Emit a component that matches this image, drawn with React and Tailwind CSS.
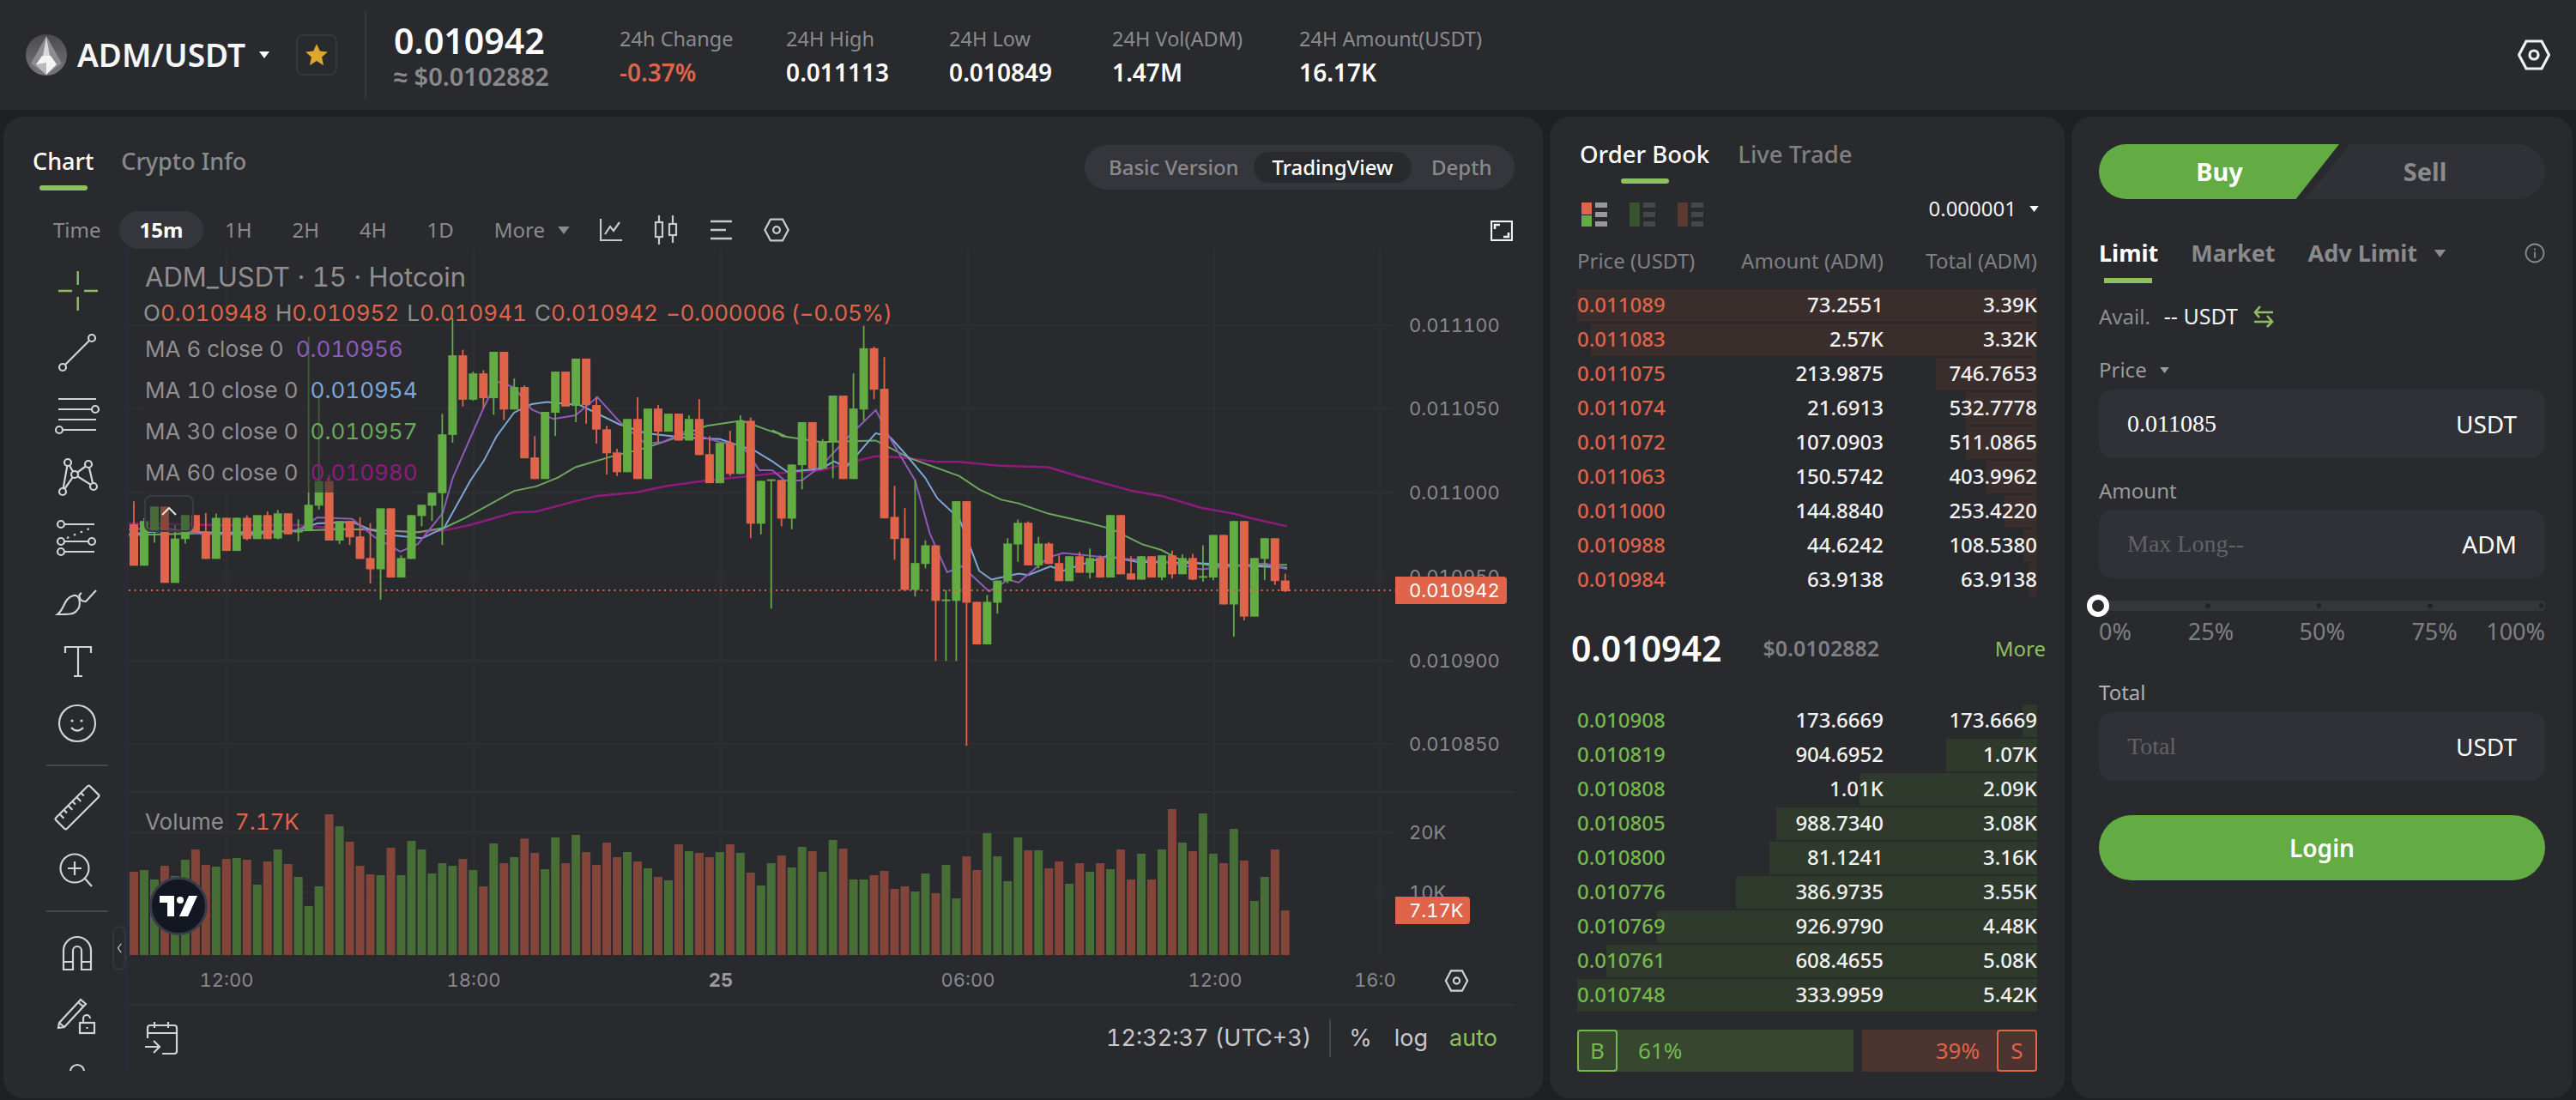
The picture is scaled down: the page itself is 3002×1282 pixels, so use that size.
import React from 'react'

const RED = '#df6449'
const GREEN = '#62ac43'

// [color, bodyTop, bodyBottom, wickTop, wickBottom], y read off the chart
const candles = [
  ['r',728,868,650,868],['g',717,868,707,868],['g',668,750,668,790],['r',668,926],['g',776,926,730,926],['g',697,778,697,793],
  ['r',697,755],['r',752,845,690,845],['g',706,845,692,845],['r',706,818],['g',706,818],['r',706,778,698,782],
  ['g',697,778],['r',697,778,685,778],['g',691,776,680,779],['r',691,762],['g',750,752,711,786],['g',662,750,95,750],
  ['g',582,665,290,678],['r',582,783,560,783],['g',717,783,717,795],['r',717,772,717,798],['r',769,845,704,845],['r',842,880,724,928],
  ['g',674,880,674,983],['r',674,908],['g',842,908,833,908],['g',697,845],['g',662,700,662,735],['g',621,665,621,717],
  ['g',424,623,355,798],['g',157,426,30,452],['r',157,307,138,330],['g',218,307,212,310],['r',218,302,207,335],['g',145,302,145,358],
  ['r',145,340,145,376],['g',264,340,235,340],['r',264,505,258,505],['r',502,575,430,575],['g',348,575],['g',212,351,212,430],
  ['r',212,330],['g',168,328,168,383],['r',168,325,168,388],['r',325,408,297,455],['r',407,488,395,560],['r',485,552,473,565],
  ['g',372,552],['r',372,575,299,575],['g',337,575],['r',337,415,325,452],['g',354,415],['r',354,445],
  ['g',372,445,360,445],['r',372,494,305,494],['r',491,589,430,589],['g',453,589],['r',453,558,412,565],['g',378,558,360,558],
  ['r',378,726,367,775],['g',581,726,581,762],['g',576,580,576,1013],['r',578,709,578,735],['g',526,709,526,745],['g',383,528,383,610],
  ['r',383,540],['g',447,540,440,540],['g',293,450,293,572],['r',293,575],['g',337,575,218,575],['g',133,340,57,378],
  ['r',133,273,128,305],['r',270,708,163,708],['r',703,778,598,848],['r',775,950,673,950],['g',859,950,578,972],['g',799,862,782,877],
  ['r',799,987,799,1190],['g',982,987,950,1190],['g',650,987,650,1190],['r',650,993,650,1477],['r',990,1134],['g',990,1134,967,1134],
  ['g',918,993,918,1030],['g',793,920,775,927],['g',723,796,712,855],['r',723,867,718,867],['g',793,867,770,877],['r',793,862,788,862],
  ['r',859,920,833,920],['g',836,920],['r',836,892,822,892],['g',842,892,810,911],['r',842,908,833,908],['g',697,908],
  ['r',697,897],['r',894,915,836,915],['g',836,915],['r',836,908],['g',833,908,833,917],['r',833,897,817,911],
  ['g',842,897,830,897],['r',842,915,828,917],['g',903,908,799,922],['g',764,908,764,917],['r',764,999],['g',717,999,717,1108],
  ['r',717,1040,717,1053],['g',842,1040],['g',775,845,775,917],['r',775,920,775,933],['r',918,954,895,957],
]

const volA = [708,702,735,687,723,666,630,684,690,663,660,666,753,672,630,681,726,828,759,507,549,603,687,717,720,624,720,600,630,714,678,687,663,702,759,609,678,657]
const volAColors = 'RGGRGGRRGRGRGRGRGGGRGRRRGRGGGGGGRGRGRG'
const volB = [232,282,339,228,318,219,279,324,246,297,279,312,336,366,378,252,276,282,297,279,252,282,351,396,318,291,333,261,276,348,237,267,375,375,360,345,408,399,417,354,423,324,441,294,342,213,294,381,228,273,273,336,312,390,318,348,318,339,270,375,285,375,270,129,246,276,144,285,318,198,309,450,366,270,483]
const volBColors = 'RRGGRGRRRRGRGRGRGRRGRGRGGRGGRGGRGGRRRRGGRGGRRGGGGRGRRGRGRGRRGRGRGRGGRGRGGRR'

const volumes = [
  ...volA.map((t, i) => [(999 - t) / 3, volAColors[i]]),
  ...volB.map((t, i) => [(639 - t) / 3, volBColors[i]]),
]

const a = (pts) => pts.map(([x, y]) => [140 + x / 1.96, 360 + y / 2.9])
const b = (pts) => pts.map(([x, y]) => [900 + x / 1.742, 360 + y / 2.9])
const line = (pts) => pts.map((p) => p[0].toFixed(1) + ',' + p[1].toFixed(1)).join(' ')

const maLines = [
  { color: '#8f1b7f', w: 2.5, pts: [...a([[20,725],[200,730],[400,730],[480,740],[600,750],[680,755],[737,750],[800,730],[900,688],[950,685],[1040,650],[1090,632],[1180,620],[1250,598],[1340,580],[1440,565]]), ...b([[0,557],[100,545],[180,510],[210,498],[260,502],[330,516],[380,517],[460,530],[560,535],[620,565],[730,615],[790,632],[870,672],[940,693],[970,707],[1045,735]])] },
  { color: '#6aa85c', w: 2, pts: [...a([[20,765],[400,750],[500,745],[560,745],[680,755],[740,740],[790,705],[900,615],[950,600],[1000,570],[1040,535],[1120,500],[1200,470],[1260,440],[1340,395],[1420,378],[1480,410],[1520,430]]), ...b([[0,410],[20,430],[100,450],[210,445],[280,505],[380,565],[420,610],[465,645],[500,657],[560,692],[640,722],[690,745],[750,795],[790,815],[830,850],[900,870],[1045,865]])] },
  { color: '#7da6d6', w: 2, pts: [...a([[20,762],[100,750],[180,755],[300,760],[400,750],[450,725],[530,720],[570,745],[620,765],[690,775],[740,740],[800,580],[830,515],[860,430],[900,350],[940,322],[975,315],[1050,325],[1140,390],[1200,420],[1290,435],[1370,440],[1450,480]]), ...b([[0,515],[30,550],[100,540],[125,515],[150,535],[210,420],[240,435],[270,490],[310,570],[335,640],[380,710],[420,885],[445,915],[500,895],[520,900],[565,870],[590,885],[680,835],[740,855],[870,860],[1045,875]])] },
  { color: '#8e5bbb', w: 2, pts: [...a([[20,745],[100,740],[180,760],[300,765],[410,745],[450,705],[530,710],[580,770],[640,820],[680,795],[737,690],[760,570],[830,335],[860,245],[900,265],[940,340],[990,372],[1040,360],[1090,298],[1140,380],[1200,455],[1240,450],[1290,415],[1370,450],[1420,460],[1460,545],[1490,545]]), ...b([[0,545],[25,580],[60,580],[100,530],[150,440],[210,342],[240,440],[290,580],[320,760],[355,890],[385,870],[440,955],[480,915],[500,925],[560,840],[590,825],[680,840],[800,855],[870,880],[1000,860],[1045,880]])] },
]

const asks = [
  ['0.011089','73.2551','3.39K',100],['0.011083','2.57K','3.32K',97],['0.011075','213.9875','746.7653',22],
  ['0.011074','21.6913','532.7778',15.7],['0.011072','107.0903','511.0865',15.5],['0.011063','150.5742','403.9962',11.2],
  ['0.011000','144.8840','253.4220',7.1],['0.010988','44.6242','108.5380',3],['0.010984','63.9138','63.9138',1.9],
]
const bids = [
  ['0.010908','173.6669','173.6669',3.2],['0.010819','904.6952','1.07K',19.7],['0.010808','1.01K','2.09K',38.6],
  ['0.010805','988.7340','3.08K',56.8],['0.010800','81.1241','3.16K',58.3],['0.010776','386.9735','3.55K',65.5],
  ['0.010769','926.9790','4.48K',82.7],['0.010761','608.4655','5.08K',93.7],['0.010748','333.9959','5.42K',100],
]

const Caret = ({ className }) => (
  <svg viewBox="0 0 12 8" className={className} fill="currentColor"><path d="M0 0h12L6 8z" /></svg>
)

const Hex = ({ className, sw = 3 }) => (
  <svg viewBox="0 0 38 36" className={className} fill="none" stroke="currentColor" strokeWidth={sw}>
    <path d="M10 2h18l8.500 16L28 34H10L1.500 18z" />
    <circle cx="19" cy="18" r="5" />
  </svg>
)

const Tool = ({ children }) => (
  <svg viewBox="0 0 60 60" className="w-[60px] h-[60px]" fill="none" stroke="#d3d3d6" strokeWidth="2.2">{children}</svg>
)

function Rail() {
  const cell = 'h-[72px] shrink-0 pl-[56px] flex items-center'
  const sep = <div className="h-[26px] shrink-0 pl-[50px] flex items-center"><div className="w-[72px] h-[2px] bg-[#44454d]" /></div>
  return (
    <div className="w-[138px] shrink-0 overflow-hidden flex flex-col pt-[13px]">
      <div className={cell}><Tool><path d="M30.700 7v16M30.700 37v16M8 30h16M38 30h16" stroke="#8fc05f" strokeWidth="2.4" /></Tool></div>
      <div className={cell}><Tool><circle cx="13" cy="47" r="4" /><circle cx="47" cy="13" r="4" /><path d="M16 44l28-28" /></Tool></div>
      <div className={cell}><Tool><path d="M8 12h44M8 24h39M8 36h44M13 48h39" /><circle cx="51" cy="24" r="4" /><circle cx="9" cy="48" r="4" /></Tool></div>
      <div className={cell}><Tool><path d="M13 48L19 14l8 14 16-12 6 26-22-14z" /><circle cx="19" cy="14" r="4" fill="#292a2e" /><circle cx="43" cy="16" r="4" fill="#292a2e" /><circle cx="27" cy="28" r="4" fill="#292a2e" /><circle cx="49" cy="42" r="4" fill="#292a2e" /><circle cx="13" cy="48" r="4" fill="#292a2e" /></Tool></div>
      <div className={cell}><Tool><circle cx="11" cy="14" r="4" /><path d="M15 14h35M15 34h28M15 46h35" /><circle cx="11" cy="34" r="4" /><circle cx="47" cy="34" r="4" /><circle cx="11" cy="46" r="4" /><path d="M18 30l29-12" strokeDasharray="2.500 6" /></Tool></div>
      <div className={cell}><Tool><path d="M7 47c9-7 7-19 19-22 8-1 9 13 3 18-3 4-9 4-22 4z" /><path d="M35 22c-5 3-2 10 5 10l12-13" /></Tool></div>
      <div className={cell}><Tool><path d="M16 20v-7h30v7M31 13v34M26 47h10" /></Tool></div>
      <div className={cell}><Tool><circle cx="30" cy="30" r="21" /><circle cx="24" cy="27" r="1.600" fill="#d3d3d6" stroke="none" /><circle cx="35" cy="27" r="1.600" fill="#d3d3d6" stroke="none" /><path d="M23 35q7 7 14 0" /></Tool></div>
      {sep}
      <div className={cell}><Tool><g transform="rotate(-45 30 30)"><rect x="2" y="21" width="56" height="18" rx="2" /><path d="M10 21v7M17 21v5M24 21v7M31 21v5M38 21v7M45 21v5" /></g></Tool></div>
      <div className={cell}><Tool><circle cx="27" cy="29" r="16.500" /><path d="M39 41l8 9M27 21v16M19 29h16" /></Tool></div>
      {sep}
      <div className={cell}><Tool><path d="M14 49V27a16 16 0 0 1 32 0v22H35V27a5 5 0 0 0-10 0v22z" /><path d="M14 40h11M35 40h11" /></Tool></div>
      <div className={cell}><Tool><path d="M9 39l25-27 6 5-25 27-7 1z" /><path d="M9 39l6 5M31 15l6 5" /><rect x="33" y="39" width="17" height="12" /><path d="M37 39v-5a4 4 0 0 1 8 0" /><path d="M41.500 44v2" /></Tool></div>
      <div className={cell}><Tool><path d="M22 24a8 8 0 0 1 16 0" /></Tool></div>
    </div>
  )
}

function ChartSvg() {
  const yz = (z) => 360 + z / 2.9
  const hGrid = [379, 476, 574, 672, 770, 867, 970, 1040]
  const vGrid = [264, 552, 840, 1128, 1415, 1608]
  const prices = [['0.011100',379],['0.011050',476],['0.011000',574],['0.010950',672],['0.010900',770],['0.010850',867],['20K',970],['10K',1040]]
  return (
    <svg viewBox="150 290 1615 880" className="absolute inset-0 w-full h-full">
      {vGrid.map((x) => <line key={x} x1={x} x2={x} y1="290" y2="1115" stroke="#303136" strokeWidth="1.500" />)}
      {hGrid.map((y) => <line key={y} x1="150" x2="1626" y1={y} y2={y} stroke="#303136" strokeWidth="1.500" />)}
      <line x1="150" x2="1765" y1="923" y2="923" stroke="#30313a" strokeWidth="2" />
      {volumes.map(([h, c], i) => (
        <rect key={i} x={151 + i * 11.98} y={1113 - h} width="10" height={h} fill={c === 'R' ? '#83453a' : '#476e36'} />
      ))}
      {maLines.map((m) => <polyline key={m.color} points={line(m.pts)} fill="none" stroke={m.color} strokeWidth={m.w} />)}
      {candles.map(([c, t, bt, wt, wb], i) => {
        const x = 156 + i * 11.98
        const col = c === 'r' ? RED : GREEN
        return (
          <g key={i}>
            <line x1={x} x2={x} y1={yz(wt ?? t)} y2={yz(wb ?? bt)} stroke={col} strokeWidth="1.800" />
            <rect x={x - 5} y={yz(t)} width="10" height={Math.max(2, (bt - t) / 2.9)} fill={col} />
          </g>
        )
      })}
      <line x1="150" x2="1626" y1="688" y2="688" stroke={RED} strokeWidth="2" strokeDasharray="2 4.500" />
      {prices.map(([t, y]) => <text key={t} x="1642" y={y + 8} fontSize="22" fill="#88888b">{t}</text>)}
      {[['12:00',264],['18:00',552],['06:00',1128],['12:00',1416]].map(([t, x], i) => (
        <text key={i} x={x} y="1150" fontSize="22" fill="#88888b" textAnchor="middle">{t}</text>
      ))}
      <text x="840" y="1150" fontSize="22" fontWeight="700" fill="#9a9a9d" textAnchor="middle">25</text>
      <text x="1578" y="1150" fontSize="22" fill="#88888b">16:00</text>
      <rect x="1626" y="1120" width="139" height="48" fill="#292a2e" />
    </svg>
  )
}

function Chart() {
  const legend = ['MA 6 close 0', 'MA 10 close 0', 'MA 30 close 0', 'MA 60 close 0']
  const vals = [['0.010956','#8e5bbb'],['0.010954','#7da6d6'],['0.010957','#6aa85c'],['0.010980','#8f1b7f']]
  return (
    <div className="relative flex-1 h-[880px] font-['Inter',sans-serif] tabular-nums">
      <ChartSvg />
      <div className="absolute left-[19px] top-[13px] flex flex-col">
        <div className="h-[40px] flex items-center text-[31px] text-[#8f8f92]">ADM_USDT · 15 · Hotcoin</div>
        <div className="mt-[3px] h-[36px] flex items-center text-[26px] whitespace-nowrap text-[#8f8f92] -ml-[2px]">
          <span>O</span><span className="text-[#df6449] mr-[9px]">0.010948</span>
          <span>H</span><span className="text-[#df6449] mr-[9px]">0.010952</span>
          <span>L</span><span className="text-[#df6449] mr-[9px]">0.010941</span>
          <span>C</span><span className="text-[#df6449] mr-[9px]">0.010942</span>
          <span className="text-[#df6449] tracking-[-0.3px]">−0.000006 (−0.05%)</span>
        </div>
        <div className="w-[317px] -ml-[4px] pl-[4px] bg-[#292a2e]/60">
          {legend.map((l, i) => (
            <div key={l} className="h-[48px] flex items-center text-[26px] text-[#8f8f92] whitespace-nowrap">
              {l}<span className="ml-[14px]" style={{ color: vals[i][1] }}>{vals[i][0]}</span>
            </div>
          ))}
        </div>
        <div className="mt-[3px] -ml-[1px] w-[58px] h-[43px] border-2 border-[#3a3b45] rounded-lg bg-[#292a2e]/50 flex items-center justify-center">
          <svg viewBox="0 0 18 10" className="w-[18px] h-[10px] mb-[6px]" fill="none" stroke="#e4e4e6" strokeWidth="2"><path d="M1 9l8-8 8 8" /></svg>
        </div>
      </div>
      <div className="absolute left-[19px] top-[650px] flex items-center h-[34px] text-[26px] text-[#8f8f92]">
        Volume<span className="ml-[13px] text-[#df6449]">7.17K</span>
      </div>
      <div className="absolute left-[24px] top-[732px] w-[68px] h-[68px] rounded-full bg-[#131722] border-[3px] border-[#3a3c48] flex items-center justify-center">
        <svg viewBox="0 0 44 24" className="w-[44px] h-[24px]" fill="#fff"><path d="M0 0h17v24H9V8H0z" /><circle cx="24" cy="5" r="4" /><path d="M34 0h10L33 24H23z" /></svg>
      </div>
      <div className="absolute left-[1476px] top-[382px] h-[32px] w-[130px] bg-[#df6449] rounded-r flex items-center pl-[16px] text-[22px] text-white">0.010942</div>
      <div className="absolute left-[1476px] top-[755px] h-[32px] w-[87px] bg-[#df6449] rounded-r flex items-center pl-[16px] text-[22px] text-white">7.17K</div>
      <Hex className="absolute left-[1533px] top-[840px] w-[29px] h-[26px] text-[#d3d3d6]" />
      <div className="absolute -left-[19px] top-[789px] w-[16px] h-[52px] border-2 border-[#34353d] rounded-lg flex items-center justify-center">
        <svg viewBox="0 0 8 16" className="w-[6px] h-[14px]" fill="none" stroke="#d3d3d6" strokeWidth="1.600"><path d="M7 1L2 8l5 7" /></svg>
      </div>
    </div>
  )
}

function Row({ row, color }) {
  return (
    <div className="relative h-[40px] grid grid-cols-[160px_197px_179px] items-center text-[24px] font-medium">
      <div className="absolute right-0 bottom-0 h-[38px]" style={{ width: row[3] + '%', background: color === 'r' ? '#3a2e2d' : '#2f3a2c' }} />
      <span className={'relative ' + (color === 'r' ? 'text-[#df6449]' : 'text-[#74b84f]')}>{row[0]}</span>
      <span className="relative text-right text-[#f2f2f2]">{row[1]}</span>
      <span className="relative text-right text-[#f2f2f2]">{row[2]}</span>
    </div>
  )
}

function BookIcon({ left, bars }) {
  return (
    <div className="flex gap-[4px] w-[30px] h-[28px]">
      <div className="w-[12px] flex flex-col gap-[1px]">{left.map((c) => <div key={c} className="flex-1" style={{ background: c }} />)}</div>
      <div className="w-[14px] flex flex-col justify-between">{[0, 1, 2].map((i) => <div key={i} className="h-[6px]" style={{ background: bars }} />)}</div>
    </div>
  )
}

function OrderBook() {
  return (
    <div className="w-[600px] rounded-3xl bg-[#292a2e] px-[32px] pt-[25px]">
      <div className="flex gap-[33px] ml-[3px] text-[27.5px] font-medium">
        <div className="flex flex-col items-center">
          <span className="leading-[38px] text-white">Order Book</span>
          <div className="mt-[9px] w-[56px] h-[6px] rounded-full bg-[#8fc05f]" />
        </div>
        <span className="leading-[38px] text-[#7f7f82]">Live Trade</span>
      </div>
      <div className="mt-[22px] flex items-start h-[28px] ml-[5px]">
        <div className="flex gap-[26px]">
          <BookIcon left={[RED, GREEN]} bars="#99999c" />
          <BookIcon left={['#37532f']} bars="#46474b" />
          <BookIcon left={['#5c3a34']} bars="#46474b" />
        </div>
        <div className="ml-auto -mr-[2px] flex items-center h-[14px] text-[24px] text-[#f2f2f2]">
          0.000001<Caret className="ml-[15px] w-[11px] h-[7px] text-white" />
        </div>
      </div>
      <div className="mt-[22px] h-[30px] grid grid-cols-[160px_197px_179px] items-center text-[24px] text-[#808084] whitespace-nowrap">
        <span>Price (USDT)</span>
        <span className="text-right">Amount (ADM)</span>
        <span className="text-right">Total (ADM)</span>
      </div>
      <div className="mt-[19px]">{asks.map((r) => <Row key={r[0]} row={r} color="r" />)}</div>
      <div className="mt-[26px] h-[70px] flex items-center">
        <span className="-ml-[7px] text-[41px] font-semibold text-white">0.010942</span>
        <span className="ml-[48px] text-[25px] font-semibold text-[#808084]">$0.0102882</span>
        <span className="ml-auto -mr-[10px] text-[24px] text-[#8fc05f]">More</span>
      </div>
      <div className="mt-[28px]">{bids.map((r) => <Row key={r[0]} row={r} color="g" />)}</div>
      <div className="mt-[21px] h-[49px] flex gap-[10px] text-[26px]">
        <div className="w-[322px] flex items-center bg-[#36462f]">
          <div className="w-[47px] h-full border-2 border-[#74b84f] rounded-sm flex items-center justify-center text-[#74b84f]">B</div>
          <span className="ml-[24px] text-[#74b84f]">61%</span>
        </div>
        <div className="flex-1 flex items-center justify-end bg-[#4b332f]">
          <span className="mr-[20px] text-[#df6449]">39%</span>
          <div className="w-[47px] h-full border-2 border-[#df6449] rounded-sm flex items-center justify-center text-[#df6449]">S</div>
        </div>
      </div>
    </div>
  )
}

function Field({ value, placeholder, unit }) {
  return (
    <div className="h-[80px] rounded-2xl bg-[#303136] flex items-center justify-between pl-[33px] pr-[33px]">
      <span className={"font-['Liberation_Serif',serif] text-[28px] " + (placeholder ? 'text-[#616266]' : 'text-white')}>{value}</span>
      <span className="text-[28px] text-white">{unit}</span>
    </div>
  )
}

function Trade() {
  return (
    <div className="w-[584px] rounded-3xl bg-[#292a2e] px-[32px] pt-[32px]">
      <div className="flex h-[64px] text-[29px] font-bold">
        <div className="w-[280px] rounded-l-full bg-[#62ac43] [clip-path:polygon(0_0,100%_0,82%_100%,0_100%)] flex items-center justify-center text-white">
          <span className="ml-[1px]">Buy</span>
        </div>
        <div className="flex-1 -ml-[40px] rounded-r-full bg-[#303136] [clip-path:polygon(52px_0,100%_0,100%_100%,0_100%)] flex items-center justify-center text-[#8a8a8d]">Sell</div>
      </div>
      <div className="mt-[44px] flex items-center h-[38px] text-[27px] font-bold text-[#8a8a8d] whitespace-nowrap">
        <span className="text-white">Limit</span>
        <span className="ml-[38px]">Market</span>
        <span className="ml-[38px]">Adv Limit</span>
        <Caret className="ml-[19px] w-[15px] h-[9px]" />
        <svg viewBox="0 0 24 24" className="ml-auto w-[24px] h-[24px]" fill="none" stroke="#8a8a8d" strokeWidth="1.800"><circle cx="12" cy="12" r="10.500" /><path d="M12 10.500v7M12 6.500v2" /></svg>
      </div>
      <div className="mt-[10px] ml-[6px] w-[56px] h-[6px] bg-[#8fc05f]" />
      <div className="mt-[24px] h-[30px] flex items-center text-[25px] text-[#f2f2f2]">
        <span className="text-[24px] text-[#8f8f92]">Avail.</span>
        <span className="ml-[16px]">-- USDT</span>
        <svg viewBox="0 0 24 26" className="ml-[18px] w-[24px] h-[26px]" fill="none" stroke="#8fc05f" strokeWidth="2.600"><path d="M23 8H2M8 1L2 8l5 6" /><path d="M1 19h21M16 12l6 7-6 6" /></svg>
      </div>
      <div className="mt-[32px] h-[30px] flex items-center text-[24px] text-[#9a9a9d]">
        Price<Caret className="ml-[15px] w-[11px] h-[7px]" />
      </div>
      <div className="mt-[8px]"><Field value="0.011085" unit="USDT" /></div>
      <div className="mt-[23px] h-[30px] flex items-center text-[24px] text-[#9a9a9d]">Amount</div>
      <div className="mt-[7px]"><Field value="Max Long--" placeholder unit="ADM" /></div>
      <div className="relative mt-[26px] h-[12px] rounded bg-[#35363b] flex justify-end items-center">
        <div className="absolute -left-[14px] -top-[7px] w-[26px] h-[26px] rounded-full border-[6px] border-white bg-[#292a2e]" />
        {[0, 1, 2, 3].map((i) => <div key={i} className="w-[6px] h-[6px] rounded-full bg-[#232428] ml-[124px] last:mr-[2px]" />)}
      </div>
      <div className="mt-[9px] h-[30px] flex items-center text-[27px] text-[#808084]">
        <span className="w-[104px]">0%</span>
        <span className="w-[130px]">25%</span>
        <span className="w-[131px]">50%</span>
        <span className="w-[87px]">75%</span>
        <span className="flex-1 text-right whitespace-nowrap">100%</span>
      </div>
      <div className="mt-[41px] h-[30px] flex items-center text-[24px] text-[#b0b0b2]">Total</div>
      <div className="mt-[8px]"><Field value="Total" placeholder unit="USDT" /></div>
      <button className="mt-[40px] w-full h-[76px] rounded-full bg-[#62ac43] text-[28px] font-semibold text-white">Login</button>
    </div>
  )
}

function Header() {
  const stats = [
    ['24h Change', '-0.37%', 'w-[194px]', 'text-[#df6449]'],
    ['24H High', '0.011113', 'w-[190px]', 'text-white'],
    ['24H Low', '0.010849', 'w-[190px]', 'text-white'],
    ['24H Vol(ADM)', '1.47M', 'w-[218px]', 'text-white'],
    ['24H Amount(USDT)', '16.17K', 'w-[260px]', 'text-white'],
  ]
  return (
    <div className="h-[128px] shrink-0 bg-[#292a2e] flex items-center pl-[30px] pr-[30px]">
      <svg viewBox="0 0 48 48" className="w-[48px] h-[48px] shrink-0">
        <defs>
          <linearGradient id="lg" x1="0" y1="0" x2="0" y2="1"><stop offset="0" stopColor="#4a4a4d" /><stop offset="1" stopColor="#77777a" /></linearGradient>
        </defs>
        <circle cx="24" cy="24" r="24" fill="url(#lg)" />
        <path d="M24 2L6 34l18 13 18-13z" fill="#8d8d90" />
        <path d="M24 3l4 22h-8z" fill="#d9d9db" />
        <path d="M19 25h10l7 10-12 12-12-12z" fill="#f4f4f5" />
        <path d="M24 33v14L12 35z" fill="#b9b9bb" />
      </svg>
      <span className="ml-[12px] text-[37px] font-semibold text-[#f6f6f6] whitespace-nowrap">ADM/USDT</span>
      <Caret className="ml-[16px] w-[12px] h-[8px] text-white" />
      <div className="ml-[31px] w-[48px] h-[48px] border-2 border-[#37383d] rounded-lg flex items-center justify-center">
        <svg viewBox="0 0 24 24" className="w-[28px] h-[28px]" fill="#dea72f"><path d="M12 1l3.300 7.200 7.700.800-5.800 5.200 1.700 8.300L12 18l-6.900 4.500 1.700-8.300L1 9l7.700-.800z" /></svg>
      </div>
      <div className="ml-[32px] w-[2px] h-[102px] bg-[#37383d]" />
      <div className="ml-[32px] mt-[2px] w-[263px] flex flex-col">
        <span className="text-[41px] leading-[48px] font-semibold text-white">0.010942</span>
        <span className="text-[29px] leading-[36px] font-semibold text-[#8a8a8d] whitespace-nowrap">≈ $0.0102882</span>
      </div>
      {stats.map(([l, v, w, c]) => (
        <div key={l} className={'mt-[2px] flex flex-col whitespace-nowrap ' + w}>
          <span className="text-[23.500px] leading-[38px] text-[#8a8a8d]">{l}</span>
          <span className={'text-[28px] leading-[40px] font-semibold ' + c}>{v}</span>
        </div>
      ))}
      <Hex className="ml-auto w-[38px] h-[36px] text-[#f2f2f2]" sw={3.2} />
    </div>
  )
}

export default function App() {
  const tfs = ['1H', '2H', '4H', '1D']
  return (
    <div className="w-[3002px] h-[1282px] bg-[#1f2023] flex flex-col overflow-hidden font-['Noto_Sans',sans-serif]">
      <Header />
      <div className="flex-1 flex gap-[8px] pt-[8px] px-[4px] pb-[2px]">
        {/* chart */}
        <div className="w-[1794px] rounded-3xl bg-[#292a2e] flex flex-col">
          <div className="h-[104px] shrink-0 flex items-start justify-between pl-[34px] pr-[33px] pt-[33px]">
            <div className="flex gap-[32px] text-[27px] font-medium">
              <div className="flex flex-col items-center">
                <span className="leading-[38px] text-white">Chart</span>
                <div className="mt-[9px] w-[56px] h-[6px] rounded-full bg-[#8fc05f]" />
              </div>
              <span className="leading-[38px] text-[#8a8a8d]">Crypto Info</span>
            </div>
            <div className="w-[501px] h-[52px] rounded-full bg-[#35363b] flex items-center pl-[28px] text-[24px] font-medium text-[#8a8a8d] whitespace-nowrap">
              <span className="w-[169px]">Basic Version</span>
              <span className="w-[184px] h-[36px] rounded-full bg-[#292a2e] flex items-center justify-center text-white">TradingView</span>
              <span className="ml-[23px]">Depth</span>
            </div>
          </div>
          <div className="h-[50px] shrink-0 flex items-end pl-[58px] pr-[35px] text-[24px] text-[#8a8a8d]">
            <div className="w-[77px] h-[44px] flex items-center">Time</div>
            <div className="w-[98px] h-[44px] rounded-full bg-[#35363b] flex items-center justify-center font-bold text-white">15m</div>
            <div className="ml-[25px] h-[44px] flex items-center gap-[47px]">
              {tfs.map((t) => <span key={t}>{t}</span>)}
              <span className="flex items-center">More<Caret className="ml-[15px] w-[14px] h-[9px]" /></span>
            </div>
            <div className="ml-[35px] h-[44px] flex items-center gap-[37px]">
              <svg viewBox="0 0 26 28" className="w-[26px] h-[28px]" fill="none" stroke="#c9c9cc" strokeWidth="2.200"><path d="M1 1v25h25M6 19l6-9 4 5 7-10" /></svg>
              <svg viewBox="0 0 28 36" className="w-[28px] h-[36px]" fill="none" stroke="#c9c9cc" strokeWidth="2.200"><rect x="2" y="9" width="8" height="17" /><rect x="18" y="11" width="8" height="13" /><path d="M6 1v8M6 26v9M22 1v10M22 24v9" /></svg>
              <svg viewBox="0 0 26 24" className="w-[26px] h-[24px]" fill="none" stroke="#c9c9cc" strokeWidth="2.600"><path d="M1 2h25M1 12h18M1 22h25" /></svg>
              <Hex className="w-[30px] h-[28px] text-[#c9c9cc]" />
            </div>
            <svg viewBox="0 0 26 24" className="ml-auto mb-[9px] w-[26px] h-[24px]" fill="none" stroke="#f2f2f2" strokeWidth="2.200"><rect x="1" y="1" width="24" height="22" /><path d="M5 10V5h6M21 14v5h-6" strokeWidth="2.600" /></svg>
          </div>
          <div className="flex h-[958px] shrink-0">
            <Rail />
            <div className="w-[8px] shrink-0 bg-[#2a2b35]" />
            <div className="w-[1615px] flex flex-col">
              <Chart />
              <div className="h-[78px] border-t-2 border-[#30313a] flex items-center pl-[18px] pr-[20px] font-['Inter',sans-serif] tabular-nums text-[27px] text-[#c8c8cc]">
                <svg viewBox="0 0 40 40" className="w-[40px] h-[40px]" fill="none" stroke="#d3d3d6" strokeWidth="2.200"><path d="M4 20V8a3 3 0 0 1 3-3h28a3 3 0 0 1 3 3v27a3 3 0 0 1-3 3H21M4 14h34M12 1v7M28 1v7M1 30h17M11 23l7 7-7 7" /></svg>
                <span className="ml-auto">12:32:37 (UTC+3)</span>
                <div className="ml-[21px] w-[2px] h-[44px] bg-[#44454d]" />
                <span className="ml-[21px]">%</span>
                <span className="ml-[26px]">log</span>
                <span className="ml-[25px] text-[#8fc05f]">auto</span>
              </div>
            </div>
          </div>
        </div>
        <OrderBook />
        <Trade />
      </div>
    </div>
  )
}
